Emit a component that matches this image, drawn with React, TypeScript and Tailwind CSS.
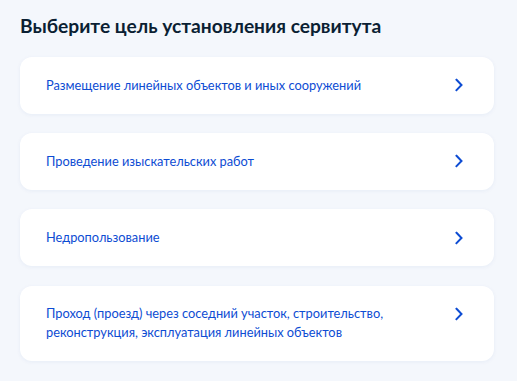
import React from "react";

const items = [
  "Размещение линейных объектов и иных сооружений",
  "Проведение изыскательских работ",
  "Недропользование",
  "Проход (проезд) через соседний участок, строительство, реконструкция, эксплуатация линейных объектов",
];

function Chevron() {
  return (
    <svg width="10" height="14" viewBox="0 0 10 14" fill="none" className="shrink-0">
      <path d="M2.5 1.8 L7.5 7 L2.5 12.2" stroke="#0d4cd3" strokeWidth="2" strokeLinecap="square" />
    </svg>
  );
}

export default function App() {
  return (
    <div
      className="w-[517px] h-[381px] bg-[#f4f7fc] px-[20px] pt-[12px] overflow-hidden"
      style={{ fontFamily: "Lato, 'Noto Sans', sans-serif" }}
    >
      <h1 className="text-[19.2px] leading-[28px] font-bold text-[#0b1f33] mb-[17px]">
        Выберите цель установления сервитута
      </h1>
      <div className="flex flex-col gap-[19.6px] w-[474px]">
        {items.map((t) => (
          <div
            key={t}
            className="bg-white rounded-[12px] shadow-[0_1px_4px_rgba(24,70,160,0.06)] pl-[26px] pr-[30px] py-[18.8px] flex items-start justify-between"
          >
            <span className="text-[12.8px] leading-[19px] text-[#0d4cd3] max-w-[350px]">{t}</span>
            <span className="h-[19px] flex items-center">
              <Chevron />
            </span>
          </div>
        ))}
      </div>
    </div>
  );
}
